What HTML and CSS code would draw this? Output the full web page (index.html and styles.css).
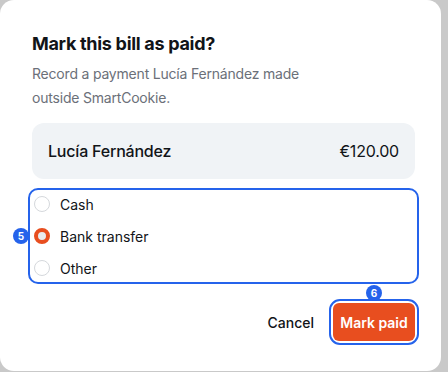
FILE: index.html
```html
<!DOCTYPE html>
<html>
<head>
<meta charset="utf-8">
<link rel="stylesheet" href="styles.css">
</head>
<body>
<div class="dialog">
  <h2 class="title">Mark this bill as paid?</h2>
  <p class="desc">Record a payment Lucía Fernández made outside SmartCookie.</p>
  <div class="summary">
    <span class="name">Lucía Fernández</span>
    <span class="amount">€120.00</span>
  </div>
  <div class="methods annotated">
    <span class="badge badge-left">5</span>
    <label class="option"><span class="radio"></span>Cash</label>
    <label class="option"><span class="radio checked"></span>Bank transfer</label>
    <label class="option"><span class="radio"></span>Other</label>
  </div>
  <div class="actions">
    <button class="btn-cancel">Cancel</button>
    <div class="primary-wrap annotated">
      <span class="badge badge-top">6</span>
      <button class="btn-primary">Mark paid</button>
    </div>
  </div>
</div>
</body>
</html>
```
FILE: styles.css
```css
* { box-sizing: border-box; }
html, body { margin: 0; padding: 0; }
body {
  width: 448px;
  height: 372px;
  background: #c9c9c9;
  font-family: Inter, "Noto Sans", sans-serif;
  overflow: hidden;
}
.dialog {
  width: 441px;
  height: 371px;
  background: #fff;
  border-radius: 14px;
  padding: 32px 26px 0 32px;
}
.title {
  margin: 0;
  font-size: 18px;
  line-height: 24px;
  font-weight: 700;
  color: #111418;
  letter-spacing: -0.3px;
}
.desc {
  margin: 6px 0 0 0;
  font-size: 14px;
  line-height: 24px;
  color: #6b7079;
  width: 290px;
  letter-spacing: -0.2px;
}
.summary {
  margin-top: 13px;
  height: 56px;
  background: #f0f3f6;
  border-radius: 12px;
  display: flex;
  align-items: center;
  justify-content: space-between;
  padding: 0 16px;
  font-size: 16px;
  color: #111418;
  letter-spacing: -0.2px;
}
.name { font-weight: 500; }
.amount { font-weight: 400; }
.methods {
  position: relative;
  margin-top: 13px;
  display: flex;
  flex-direction: column;
  gap: 8px;
}
.annotated {
  outline: 2px solid #2563eb;
  outline-offset: 2px;
  border-radius: 6px;
}
.option {
  display: flex;
  align-items: center;
  height: 24px;
  font-size: 14px;
  color: #111418;
  gap: 10px;
  padding-left: 2px;
}
.radio {
  width: 16px;
  height: 16px;
  border-radius: 50%;
  border: 1px solid #d5d8dc;
  background: #fff;
}
.radio.checked {
  border: 4px solid #e84e1f;
  background: #e9ebee;
}
.badge {
  position: absolute;
  width: 16px;
  height: 16px;
  border-radius: 50%;
  background: #2563eb;
  color: #fff;
  font-size: 10px;
  font-weight: 700;
  display: flex;
  align-items: center;
  justify-content: center;
  z-index: 2;
}
.badge-left { left: -19px; top: 36px; }
.badge-top { left: 33px; top: -18px; }
.actions {
  margin-top: 23px;
  display: flex;
  justify-content: flex-end;
  align-items: center;
  gap: 19px;
}
.btn-cancel {
  border: 0;
  background: none;
  font-family: inherit;
  font-size: 14px;
  font-weight: 500;
  color: #111418;
  padding: 0;
}
.primary-wrap {
  position: relative;
  border-radius: 7px;
}
.btn-primary {
  display: block;
  border: 0;
  background: #e84e1f;
  color: #fff;
  font-family: inherit;
  font-size: 14px;
  font-weight: 600;
  height: 38px;
  width: 82px;
  border-radius: 6px;
  padding: 0;
}
```
